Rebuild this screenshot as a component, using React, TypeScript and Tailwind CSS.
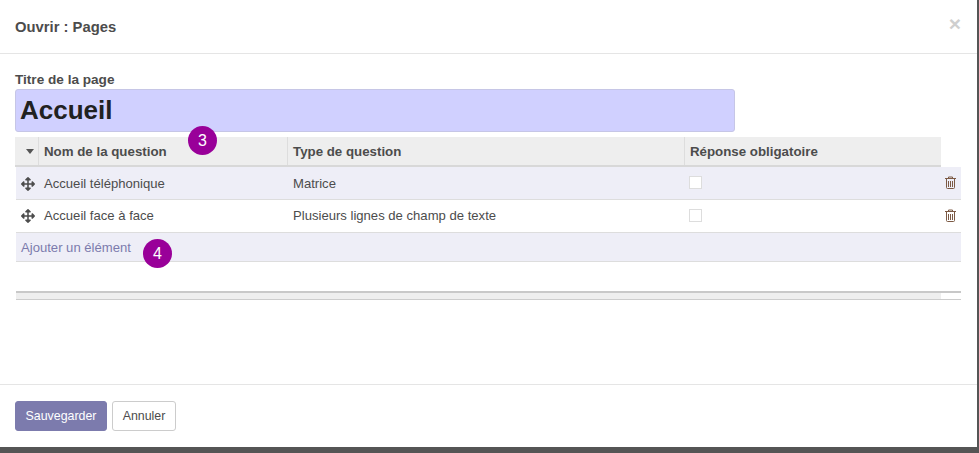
import React from 'react';
import { FaArrowsAlt } from 'react-icons/fa';

const rows = [
  { name: 'Accueil téléphonique', type: 'Matrice', odd: true },
  { name: 'Accueil face à face', type: 'Plusieurs lignes de champ de texte', odd: false },
];

const Badge = ({ label, className }: { label: string; className: string }) => (
  <div className={`absolute w-[29px] h-[29px] rounded-full bg-[#990099] text-white text-[16px] flex items-center justify-center ${className}`}>
    {label}
  </div>
);

const TrashIcon = () => (
  <svg width="11" height="13" viewBox="0 0 11 13" fill="none" className="text-[#7c5a45] mb-[2px]">
    <path d="M3.5 2V1h4v1" stroke="currentColor" />
    <path d="M0 2.5h11" stroke="currentColor" />
    <path d="M1.5 3v8.5a1 1 0 0 0 1 1h6a1 1 0 0 0 1-1V3" stroke="currentColor" />
    <path d="M3.5 5v6M5.5 5v6M7.5 5v6" stroke="currentColor" />
  </svg>
);

export default function App() {
  return (
    <div className="relative w-[979px] h-[453px] overflow-hidden bg-[#555555] font-['Liberation_Sans',Arial,sans-serif] text-[13.1px] text-[#4c4c4c]">
      <div className="w-[977px] h-[447px] bg-white flex flex-col">
        <div className="h-[54px] shrink-0 border-b border-[#e5e5e5] pl-[15px] pr-[16px] flex items-center justify-between">
          <h4 className="text-[14.8px] font-bold leading-none pt-px">Ouvrir : Pages</h4>
          <span className="text-[#cfcfcf] text-[21px] font-bold leading-none mb-[6px]">×</span>
        </div>

        <div className="flex-1 pl-[15px] pr-[16px] pt-[17px]">
          <label className="block font-bold text-[13.6px] leading-[18px]">Titre de la page</label>
          <div className="w-[720px] h-[43px] bg-[#d0d0ff] border border-[#c6c6e6] rounded-[3px] pl-[4px] flex items-center text-[26px] font-bold text-[#212121]">
            Accueil
          </div>

          <div className="relative mt-[5px] w-[946px]">
            <div className="flex w-[926px] h-[30px] bg-[#eeeeee] border-b-2 border-[#d8d8d8] font-bold text-[13.3px] leading-[29px]">
              <div className="w-[24px] border-r border-[#dddddd] flex items-center justify-center pl-[6px]">
                <span className="w-0 h-0 border-x-[4.5px] border-x-transparent border-t-[5px] border-t-[#555555]" />
              </div>
              <div className="w-[249px] pl-[5px] border-r border-[#dddddd]">Nom de la question</div>
              <div className="w-[397px] pl-[5px] border-r border-[#dddddd]">Type de question</div>
              <div className="flex-1 pl-[5px]">Réponse obligatoire</div>
            </div>

            {rows.map((row) => (
              <div key={row.name} className={`ml-px flex items-center h-[33px] border-b border-[#dddddd] ${row.odd ? 'bg-[#eeeef7]' : 'bg-white'}`}>
                <div className={`w-[23px] flex justify-center ${row.odd ? 'pt-px' : ''}`}>
                  <FaArrowsAlt className="w-[14px] h-[14px] text-[#4c4c4c]" />
                </div>
                <div className={`w-[249px] pl-[5px] ${row.odd ? 'pt-px' : ''}`}>{row.name}</div>
                <div className={`w-[397px] pl-[5px] ${row.odd ? 'pt-px' : ''}`}>{row.type}</div>
                <div className="flex-1 pl-[4px]">
                  <div className="w-[13px] h-[13px] bg-white border border-[#dddddd] mb-px" />
                </div>
                <div className="w-[20px] flex justify-center pr-[1px]">
                  <TrashIcon />
                </div>
              </div>
            ))}

            <div className="ml-px h-[29px] bg-[#eeeef7] border-b border-[#dddddd] pl-[5px] pt-[5px] text-[#7c7bad]">
              Ajouter un élément
            </div>

            <div className="mt-[29px] ml-px">
              <div className="h-[9px] border-t-2 border-b border-t-[#c8c8c8] border-b-[#cccccc]">
                <div className="w-[925px] h-full bg-[#eeeeee]" />
              </div>
            </div>

            <Badge label="3" className="left-[173px] top-[-11px]" />
            <Badge label="4" className="left-[128px] top-[102px]" />
          </div>
        </div>

        <div className="h-[63px] shrink-0 border-t border-[#e5e5e5] pl-[15px] pt-[16px] flex items-start gap-[5px] text-[12.4px]">
          <button className="w-[92px] h-[30px] bg-[#7c7bad] border border-[#7c7bad] rounded-[3px] text-white">Sauvegarder</button>
          <button className="w-[64px] h-[30px] bg-white border border-[#cccccc] rounded-[3px] text-[#4c4c4c]">Annuler</button>
        </div>
      </div>
    </div>
  );
}
